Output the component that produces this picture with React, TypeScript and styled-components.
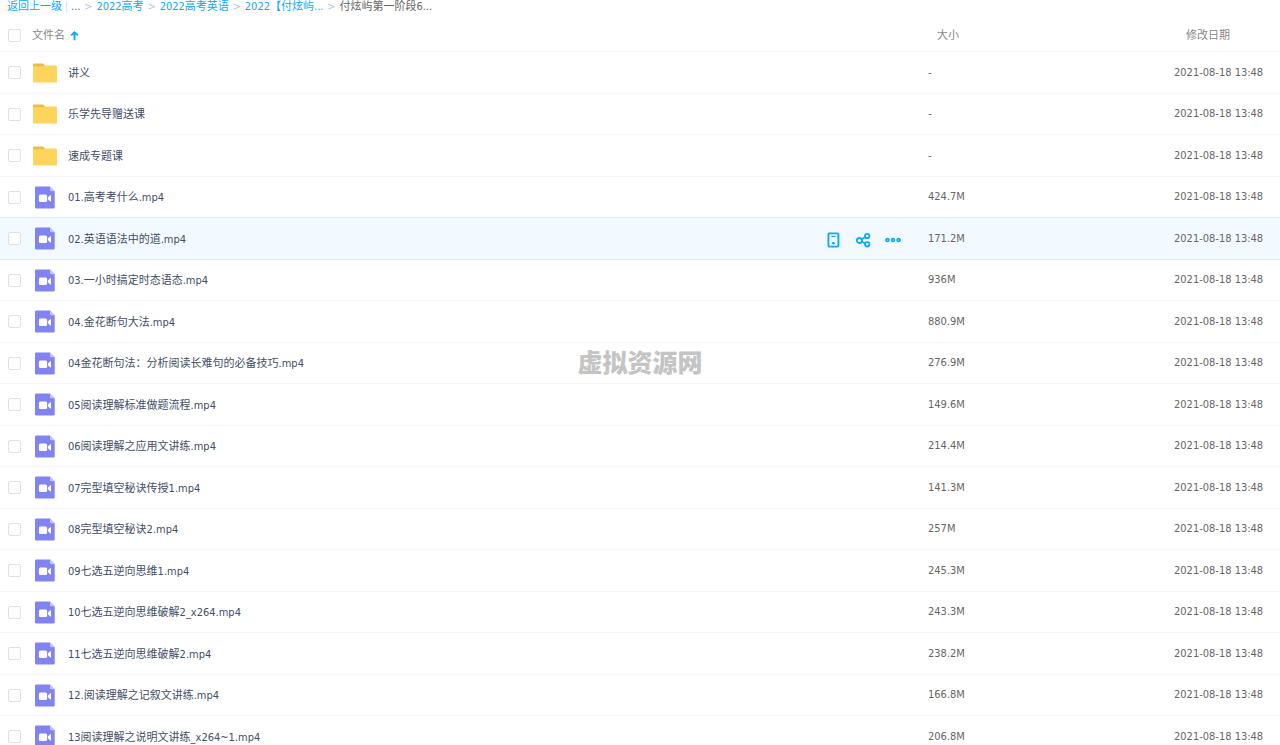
import React from "react";
import styled, { createGlobalStyle } from "styled-components";

const GlobalStyle = createGlobalStyle`
  *, *::before, *::after { box-sizing: border-box; }
  html, body { margin: 0; background: #fff; }
  body {
    overflow: hidden;
    color: #424e67;
    font-family: "DejaVu Sans Condensed", "Noto Sans CJK SC", sans-serif;
    font-size: 11px;
    line-height: 16px;
  }
`;

const Page = styled.main`
  position: relative;
  height: 100vh;
  overflow: hidden;
`;

const Breadcrumb = styled.nav`
  display: flex;
  align-items: center;
  height: 18px;
  padding: 0 7px 4px;
  white-space: pre;
`;

const Crumb = styled.a`
  color: #09aaff;
  text-decoration: none;
`;

const Divider = styled.span`
  width: 9px;
  text-align: center;
  color: #c4dbfe;
`;

const Separator = styled.span`
  width: 16px;
  text-align: center;
  color: #a9c6ee;
`;

const CrumbText = styled.span`
  color: #666;
`;

const Table = styled.table`
  width: 100%;
  table-layout: fixed;
  border-collapse: separate;
  border-spacing: 0;
  white-space: nowrap;
`;

const CheckCol = styled.col`
  width: 32px;
`;

const SizeCol = styled.col`
  width: 246px;
`;

const DateCol = styled.col`
  width: 106px;
`;

const HeadCell = styled.th<{ $indent?: number }>`
  height: 34px;
  padding: 2px 0 0 ${(p) => p.$indent ?? 0}px;
  border-bottom: 1px solid #f2f6fd;
  color: #888;
  font-weight: 400;
  text-align: left;
  vertical-align: middle;
`;

const SortButton = styled.button`
  display: flex;
  align-items: center;
  gap: 5px;
  padding: 0;
  border: 0;
  background: none;
  color: inherit;
  font: inherit;
`;

const Cell = styled.td`
  padding: 0;
  border-bottom: 1px solid #f2f6fd;
  vertical-align: middle;
`;

const MetaCell = styled(Cell)`
  color: #666;
`;

const Row = styled.tr<{ $active?: boolean }>`
  height: 41px;
  background: ${(p) => (p.$active ? "#f3faff" : "transparent")};

  &:nth-child(odd) {
    height: 42px;
  }

  ${Cell}, ${MetaCell} {
    border-bottom-color: ${(p) => (p.$active ? "#d9ebff" : "#f2f6fd")};
  }

  &:has(+ [data-active="true"]) > td {
    border-bottom-color: #d9ebff;
  }
`;

const Checkbox = styled.input`
  display: block;
  appearance: none;
  width: 13px;
  height: 13px;
  margin: 0 0 0 8px;
  border: 1px solid #dce1e9;
  border-radius: 2px;
  background: #fff;
`;

const NameLine = styled.div`
  display: flex;
  align-items: center;
`;

const IconSlot = styled.span`
  display: flex;
  justify-content: center;
  width: 26px;
  margin-right: 10px;

  svg { display: block; }
`;

const FileLink = styled.a`
  padding-top: 2px;
  color: #424e67;
  text-decoration: none;
`;

const Actions = styled.div`
  display: flex;
  align-items: center;
  gap: 14px;
  margin-left: auto;
  padding: 2px 27px 0 0;
`;

const ActionButton = styled.button`
  display: flex;
  padding: 0;
  border: 0;
  background: none;
  color: #09aaff;
`;

const Watermark = styled.div`
  position: absolute;
  top: 50%;
  left: 50%;
  transform: translate(-50%, -50%);
  padding-bottom: 24px;
  color: #c4c4c4;
  font-family: "Noto Sans CJK SC", sans-serif;
  font-size: 25px;
  font-weight: 900;
  line-height: 30px;
  white-space: nowrap;
  pointer-events: none;
`;

const FolderIcon = () => (
  <svg width="24" height="20" viewBox="0 0 24 20" aria-hidden="true">
    <path d="M0 8V1.6Q0 .4 1.2 .4H9.6Q10.4 .4 10.8 1.1L12 3V8Z" fill="#e9bd4c" />
    <path d="M0 4Q0 3.2 1 3.2H10.6L11.6 2.4H22.8Q24 2.4 24 3.6V18.4Q24 19.6 22.8 19.6H1.2Q0 19.6 0 18.4Z" fill="#ffd45c" />
  </svg>
);

const VideoIcon = () => (
  <svg width="20" height="23" viewBox="0 0 20 23" aria-hidden="true">
    <path d="M1.4 .4H15L19.7 5.2V21.2Q19.7 22.6 18.3 22.6H1.4Q0 22.6 0 21.2V1.8Q0 .4 1.4 .4Z" fill="#8183f1" />
    <path d="M15 .4L19.7 5.2H16.2Q15 5.2 15 4Z" fill="#c4c5fb" />
    <rect x="3.9" y="8.6" width="8.2" height="7.4" rx="1.5" fill="#fff" />
    <path d="M12.9 11.4L15.3 9.2Q16 8.8 16 9.6V15Q16 15.8 15.3 15.4L12.9 13.2Z" fill="#fff" />
  </svg>
);

const SortArrow = () => (
  <svg width="9" height="10" viewBox="0 0 9 10" aria-hidden="true">
    <path d="M4.5 9.2V1.5M1.2 4.4L4.5 1.3L7.8 4.4" fill="none" stroke="#09aaff" strokeWidth="1.9" />
  </svg>
);

const DeviceIcon = () => (
  <svg width="16" height="16" viewBox="0 0 16 16" fill="none" stroke="currentColor" aria-hidden="true">
    <rect x="3.4" y="1.4" width="10" height="13.2" rx="1" strokeWidth="1.9" />
    <path d="M6.4 4.4H10.4" strokeWidth="1.3" />
    <circle cx="8.4" cy="11.3" r="1.4" fill="currentColor" stroke="none" />
  </svg>
);

const ShareIcon = () => (
  <svg width="16" height="16" viewBox="0 0 16 16" fill="none" stroke="currentColor" strokeWidth="1.8" aria-hidden="true">
    <circle cx="4.4" cy="8.4" r="2.6" />
    <circle cx="12.2" cy="4" r="2.2" />
    <circle cx="12.2" cy="12.3" r="2.2" />
    <path d="M6.8 7.2L10.2 5.2M6.8 9.7L10.2 11.3" />
  </svg>
);

const MoreIcon = () => (
  <svg width="16" height="16" viewBox="0 0 16 16" fill="none" stroke="currentColor" strokeWidth="1.8" aria-hidden="true">
    <circle cx="2.4" cy="8" r="1.4" />
    <circle cx="8" cy="8" r="1.4" />
    <circle cx="13.6" cy="8" r="1.4" />
  </svg>
);

type Entry = { name: string; size: string; folder?: boolean; active?: boolean };

const modified = "2021-08-18 13:48";

const entries: Entry[] = [
  { name: "讲义", size: "-", folder: true },
  { name: "乐学先导赠送课", size: "-", folder: true },
  { name: "速成专题课", size: "-", folder: true },
  { name: "01.高考考什么.mp4", size: "424.7M" },
  { name: "02.英语语法中的道.mp4", size: "171.2M", active: true },
  { name: "03.一小时搞定时态语态.mp4", size: "936M" },
  { name: "04.金花断句大法.mp4", size: "880.9M" },
  { name: "04金花断句法：分析阅读长难句的必备技巧.mp4", size: "276.9M" },
  { name: "05阅读理解标准做题流程.mp4", size: "149.6M" },
  { name: "06阅读理解之应用文讲练.mp4", size: "214.4M" },
  { name: "07完型填空秘诀传授1.mp4", size: "141.3M" },
  { name: "08完型填空秘诀2.mp4", size: "257M" },
  { name: "09七选五逆向思维1.mp4", size: "245.3M" },
  { name: "10七选五逆向思维破解2_x264.mp4", size: "243.3M" },
  { name: "11七选五逆向思维破解2.mp4", size: "238.2M" },
  { name: "12.阅读理解之记叙文讲练.mp4", size: "166.8M" },
  { name: "13阅读理解之说明文讲练_x264~1.mp4", size: "206.8M" },
];

const crumbs = ["2022高考", "2022高考英语", "2022【付炫屿..."];

export default function App() {
  return (
    <>
      <GlobalStyle />
      <Page>
        <Breadcrumb>
          <Crumb href="#">返回上一级</Crumb>
          <Divider>|</Divider>
          <CrumbText>...</CrumbText>
          {crumbs.map((crumb) => (
            <React.Fragment key={crumb}>
              <Separator>&gt;</Separator>
              <Crumb href="#">{crumb}</Crumb>
            </React.Fragment>
          ))}
          <Separator>&gt;</Separator>
          <CrumbText>付炫屿第一阶段6...</CrumbText>
        </Breadcrumb>
        <Table>
          <colgroup>
            <CheckCol />
            <col />
            <SizeCol />
            <DateCol />
          </colgroup>
          <thead>
            <tr>
              <HeadCell>
                <Checkbox type="checkbox" aria-label="全选" />
              </HeadCell>
              <HeadCell>
                <SortButton type="button">
                  文件名
                  <SortArrow />
                </SortButton>
              </HeadCell>
              <HeadCell $indent={9}>大小</HeadCell>
              <HeadCell $indent={12}>修改日期</HeadCell>
            </tr>
          </thead>
          <tbody>
            {entries.map((entry) => (
              <Row key={entry.name} $active={entry.active} data-active={entry.active}>
                <Cell>
                  <Checkbox type="checkbox" aria-label={entry.name} />
                </Cell>
                <Cell>
                  <NameLine>
                    <IconSlot>{entry.folder ? <FolderIcon /> : <VideoIcon />}</IconSlot>
                    <FileLink href="#">{entry.name}</FileLink>
                    {entry.active && (
                      <Actions>
                        <ActionButton type="button" aria-label="发送到设备">
                          <DeviceIcon />
                        </ActionButton>
                        <ActionButton type="button" aria-label="分享">
                          <ShareIcon />
                        </ActionButton>
                        <ActionButton type="button" aria-label="更多">
                          <MoreIcon />
                        </ActionButton>
                      </Actions>
                    )}
                  </NameLine>
                </Cell>
                <MetaCell>{entry.size}</MetaCell>
                <MetaCell>{modified}</MetaCell>
              </Row>
            ))}
          </tbody>
        </Table>
        <Watermark>虚拟资源网</Watermark>
      </Page>
    </>
  );
}
